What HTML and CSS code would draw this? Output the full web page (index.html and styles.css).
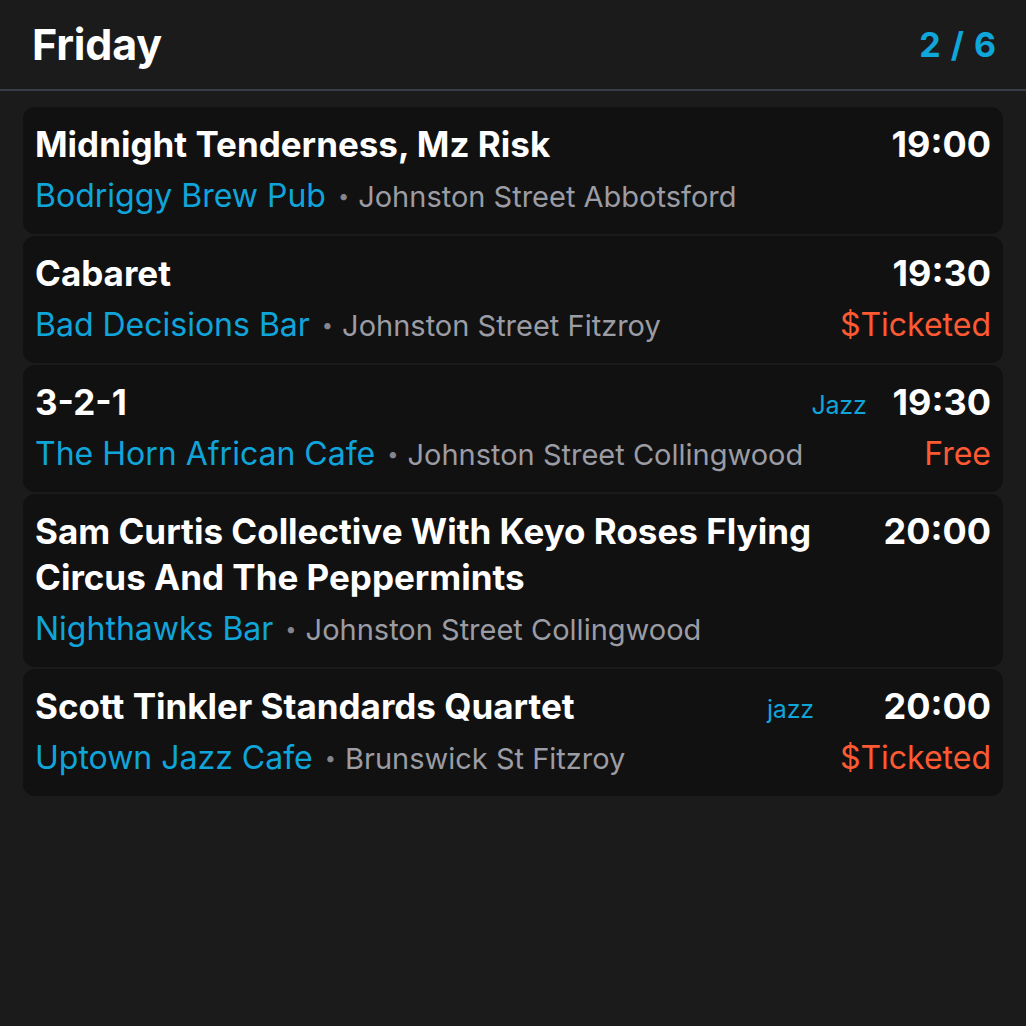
FILE: index.html
```html
<!DOCTYPE html>
<html>
<head>
<meta charset="utf-8">
<link rel="stylesheet" href="styles.css">
</head>
<body>
<div class="app">
  <header class="header">
    <h1 class="day">Friday</h1>
    <div class="pager">2 / 6</div>
  </header>
  <main class="list">
    <div class="card">
      <div class="main">
        <div class="title">Midnight Tenderness, Mz Risk</div>
        <div class="where"><span class="venue">Bodriggy Brew Pub</span><span class="dot">•</span><span class="addr">Johnston Street Abbotsford</span></div>
      </div>
      <div class="side">
        <div class="time">19:00</div>
      </div>
    </div>
    <div class="card">
      <div class="main">
        <div class="title">Cabaret</div>
        <div class="where"><span class="venue">Bad Decisions Bar</span><span class="dot">•</span><span class="addr">Johnston Street Fitzroy</span></div>
      </div>
      <div class="side">
        <div class="time">19:30</div>
        <div class="price">$Ticketed</div>
      </div>
    </div>
    <div class="card">
      <div class="main">
        <div class="title">3-2-1</div>
        <div class="where"><span class="venue">The Horn African Cafe</span><span class="dot">•</span><span class="addr">Johnston Street Collingwood</span></div>
      </div>
      <div class="genre">Jazz</div>
      <div class="side">
        <div class="time">19:30</div>
        <div class="price">Free</div>
      </div>
    </div>
    <div class="card">
      <div class="main">
        <div class="title">Sam Curtis Collective With Keyo Roses Flying Circus And The Peppermints</div>
        <div class="where"><span class="venue">Nighthawks Bar</span><span class="dot">•</span><span class="addr">Johnston Street Collingwood</span></div>
      </div>
      <div class="side">
        <div class="time">20:00</div>
      </div>
    </div>
    <div class="card">
      <div class="main">
        <div class="title">Scott Tinkler Standards Quartet</div>
        <div class="where"><span class="venue">Uptown Jazz Cafe</span><span class="dot">•</span><span class="addr">Brunswick St Fitzroy</span></div>
      </div>
      <div class="genre">jazz</div>
      <div class="side">
        <div class="time">20:00</div>
        <div class="price">$Ticketed</div>
      </div>
    </div>
  </main>
</div>
</body>
</html>
```

FILE: styles.css
```css
html, body {
  margin: 0;
  padding: 0;
  background: #1b1b1b;
}
body {
  font-family: Inter, "Noto Sans", sans-serif;
  color: #ffffff;
  width: 1026px;
  height: 1026px;
}
.header {
  height: 89px;
  display: flex;
  align-items: center;
  justify-content: space-between;
  padding: 0 29px 0 32px;
  border-bottom: 2px solid #383d47;
}
.day {
  margin: 0;
  font-size: 43px;
  font-weight: 700;
  letter-spacing: -0.2px;
  line-height: 1;
}
.pager {
  font-size: 34px;
  font-weight: 700;
  color: #0fa6dc;
  letter-spacing: 1px;
}
.list {
  padding: 16px 23px 0;
  display: flex;
  flex-direction: column;
  gap: 2px;
}
.card {
  background: #111111;
  border-radius: 12px;
  padding: 14px 12px 20px 12px;
  display: flex;
  align-items: flex-start;
}
.main {
  flex: 1;
  min-width: 0;
}
.title {
  font-size: 35px;
  font-weight: 700;
  line-height: 46px;
  letter-spacing: 0;
}
.where {
  margin-top: 10px;
  height: 37px;
  display: flex;
  align-items: baseline;
  white-space: nowrap;
}
.where span {
  line-height: 37px;
}
.venue {
  color: #10a5da;
  font-size: 32px;
}
.dot {
  color: #85868d;
  font-size: 20px;
  margin: 0 9px 0 12px;
  position: relative;
  top: -4px;
}
.addr {
  color: #9b9ca4;
  font-size: 29px;
}
.genre {
  color: #10a5da;
  font-size: 25px;
  line-height: 46px;
  margin: 0 26px 0 20px;
  padding-top: 3px;
  letter-spacing: -0.2px;
}
.side {
  display: flex;
  flex-direction: column;
  align-items: flex-end;
  margin-left: 26px;
}
.genre + .side {
  margin-left: 0;
}
.time {
  font-size: 36px;
  font-weight: 700;
  line-height: 46px;
}
.price {
  margin-top: 10px;
  font-size: 32px;
  line-height: 37px;
  color: #fd5a34;
}
```
